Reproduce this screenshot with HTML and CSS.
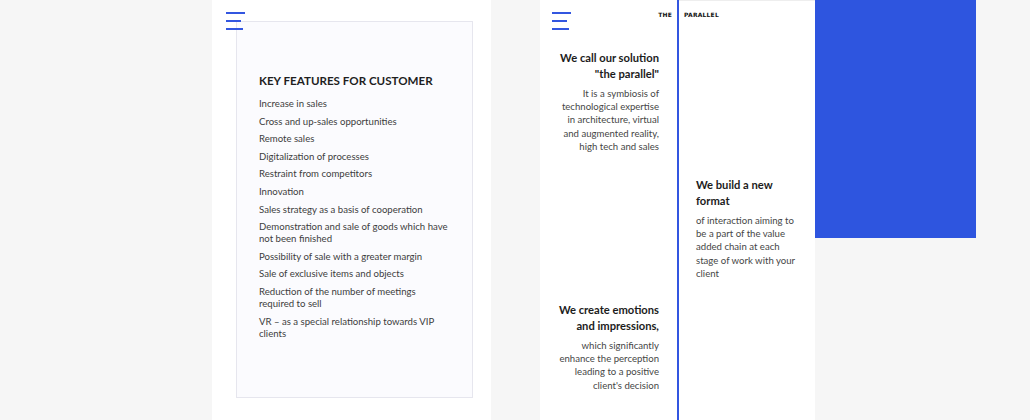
FILE: index.html
```html
<!DOCTYPE html>
<html>
<head>
<meta charset="utf-8">
<link rel="stylesheet" href="styles.css">
</head>
<body>
<div class="page">
  <section class="panel-left">
    <div class="burger burger-left"><span class="l1"></span><span class="l2"></span><span class="l3"></span></div>
    <div class="card">
      <h2 class="card-title">KEY FEATURES FOR CUSTOMER</h2>
      <ul class="features">
        <li>Increase in sales</li>
        <li>Cross and up-sales opportunities</li>
        <li>Remote sales</li>
        <li>Digitalization of processes</li>
        <li>Restraint from competitors</li>
        <li>Innovation</li>
        <li>Sales strategy as a basis of cooperation</li>
        <li>Demonstration and sale of goods which have not been finished</li>
        <li>Possibility of sale with a greater margin</li>
        <li>Sale of exclusive items and objects</li>
        <li>Reduction of the number of meetings required to sell</li>
        <li>VR – as a special relationship towards VIP clients</li>
      </ul>
    </div>
  </section>

  <section class="panel-right">
    <div class="col col-a">
      <div class="col-a-top">
        <div class="burger"><span class="l1"></span><span class="l2"></span><span class="l3"></span></div>
        <span class="logo-word">THE</span>
      </div>
      <div class="block block-1">
        <h3>We call our solution<br>"the parallel"</h3>
        <p>It is a symbiosis of<br>technological expertise<br>in architecture, virtual<br>and augmented reality,<br>high tech and sales</p>
      </div>
      <div class="block block-3">
        <h3>We create emotions<br>and impressions,</h3>
        <p>which significantly<br>enhance the perception<br>leading to a positive<br>client's decision</p>
      </div>
    </div>
    <div class="divider"></div>
    <div class="col col-b">
      <span class="logo-word logo-b">PARALLEL</span>
      <div class="block block-2">
        <h3>We build a new<br>format</h3>
        <p>of interaction aiming to<br>be a part of the value<br>added chain at each<br>stage of work with your<br>client</p>
      </div>
    </div>
  </section>

  <div class="blue-box"></div>
</div>
</body>
</html>
```

FILE: styles.css
```css
html, body {
  margin: 0;
  padding: 0;
}
body {
  background: #f6f6f6;
  font-family: "Lato", "Open Sans", sans-serif;
  width: 1030px;
  height: 420px;
  overflow: hidden;
}
.page {
  display: flex;
  align-items: flex-start;
  height: 420px;
}

/* LEFT PANEL */
.panel-left {
  position: relative;
  margin-left: 212px;
  width: 279px;
  height: 420px;
  background: #ffffff;
  padding-top: 21px;
  box-sizing: border-box;
}
.burger {
  display: flex;
  flex-direction: column;
  gap: 6px;
  width: 20px;
}
.burger span {
  display: block;
  height: 2px;
  background: #3356e0;
}
.burger .l1 { width: 19px; }
.burger .l2 { width: 15px; }
.burger .l3 { width: 17px; }
.burger-left {
  position: absolute;
  left: 14px;
  top: 12px;
}
.card {
  margin-left: 24px;
  width: 237px;
  height: 377px;
  box-sizing: border-box;
  border: 1px solid #e6e6ee;
  background: #fbfbfe;
  padding: 52px 20px 0 22px;
}
.card-title {
  margin: 0 0 11px 0;
  font-size: 11.6px;
  font-weight: 700;
  color: #1f1f1f;
  letter-spacing: 0;
  white-space: nowrap;
}
.features {
  list-style: none;
  margin: 0;
  padding: 0;
  display: flex;
  flex-direction: column;
  gap: 5.6px;
}
.features li {
  font-size: 9.6px;
  line-height: 12px;
  color: #3d3d3d;
}

/* RIGHT PANEL */
.panel-right {
  margin-left: 49px;
  width: 275px;
  height: 420px;
  background: #ffffff;
  display: flex;
}
.col-a {
  width: 137px;
  box-sizing: border-box;
  padding: 12px 0 0 12px;
  text-align: right;
}
.col-a-top {
  display: flex;
  justify-content: space-between;
  align-items: flex-start;
  padding-right: 5px;
}
.logo-word {
  font-family: "DejaVu Sans", sans-serif;
  font-size: 6px;
  font-weight: 700;
  color: #111;
  letter-spacing: 0.2px;
  line-height: 8px;
  margin-top: -1px;
}
.divider {
  width: 2px;
  height: 420px;
  background: #3356e0;
}
.col-b {
  width: 136px;
  box-sizing: border-box;
  padding: 11px 0 0 5px;
  border-top: 1px solid #eeeeee;
}
.logo-b {
  display: block;
}
.block h3 {
  margin: 0;
  font-size: 11.2px;
  line-height: 15.5px;
  font-weight: 700;
  color: #1c1c1c;
  white-space: nowrap;
}
.block p {
  margin: 6px 0 0 0;
  font-size: 9.6px;
  line-height: 13.2px;
  color: #464646;
  white-space: nowrap;
}
.block-1, .block-3 {
  padding: 0 18px 0 0;
}
.block-1 {
  margin-top: 20px;
}
.block-3 {
  margin-top: 149px;
}
.block-2 {
  margin-top: 158px;
  padding-left: 12px;
  padding-right: 8px;
}

.blue-box {
  width: 161px;
  height: 238px;
  background: #2e55df;
}
```
